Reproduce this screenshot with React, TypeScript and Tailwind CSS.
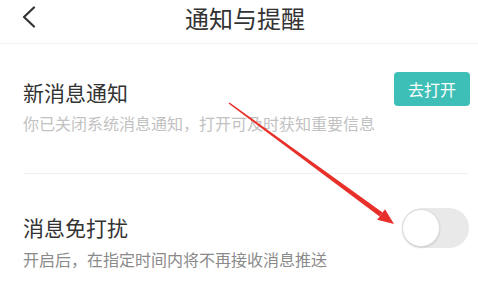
export default function App() {
  const font = { fontFamily: '"Noto Sans CJK SC", "Noto Sans", sans-serif' }
  return (
    <div className="relative w-[478px] h-[287px] bg-white overflow-hidden" style={font}>
      <header className="relative h-[44px] border-b border-[#f1f1f1] flex justify-center pl-[12px]">
        <svg className="absolute left-[20px] top-[6px]" width="18" height="22" viewBox="0 0 18 22" fill="none">
          <polyline points="14,1.5 4,11 14,20.5" stroke="#333" strokeWidth="2.2" strokeLinecap="round" strokeLinejoin="round" />
        </svg>
        <h1 className="text-[24px] leading-[35px] text-[#333] font-normal">通知与提醒</h1>
      </header>

      <section className="pl-[23px] pr-[8px] pt-[28px]">
        <div className="flex justify-between items-start">
          <div className="mt-[6px] text-[21px] leading-[28px] text-[#333]">新消息通知</div>
          <button className="w-[76px] h-[34px] rounded-[4px] bg-[#3dbeb7] text-white text-[16px] leading-[34px]">
            去打开
          </button>
        </div>
        <p className="mt-[6px] text-[16px] leading-[22px] text-[#c2c2c2]">你已关闭系统消息通知，打开可及时获知重要信息</p>
      </section>

      <div className="ml-[23px] mr-[10px] mt-[39px] border-t border-[#f0f0f0]" />

      <section className="pl-[23px] pr-[9px] pt-[34px]">
        <div className="flex justify-between items-center">
          <div className="-mt-[2px] text-[21px] leading-[28px] text-[#333]">消息免打扰</div>
          <div className="relative w-[67px] h-[40px] rounded-full bg-[#e9e9e9]">
            <div className="absolute left-0 top-[1px] w-[38px] h-[38px] rounded-full bg-white border border-[#dcdcdc] shadow-[0_1px_2px_rgba(0,0,0,0.12)]" />
          </div>
        </div>
        <p className="text-[16px] leading-[22px] text-[#8a8a8a]">开启后，在指定时间内将不再接收消息推送</p>
      </section>

      <svg className="absolute inset-0 pointer-events-none" width="478" height="287" viewBox="0 0 478 287">
        <polygon points="228.5,103.6 229.5,102.4 382.6,212.5 379.6,216.5" fill="#e8302a" />
        <polygon points="394,224 377.2,219.8 385,209.2" fill="#e8302a" />
      </svg>
    </div>
  )
}
